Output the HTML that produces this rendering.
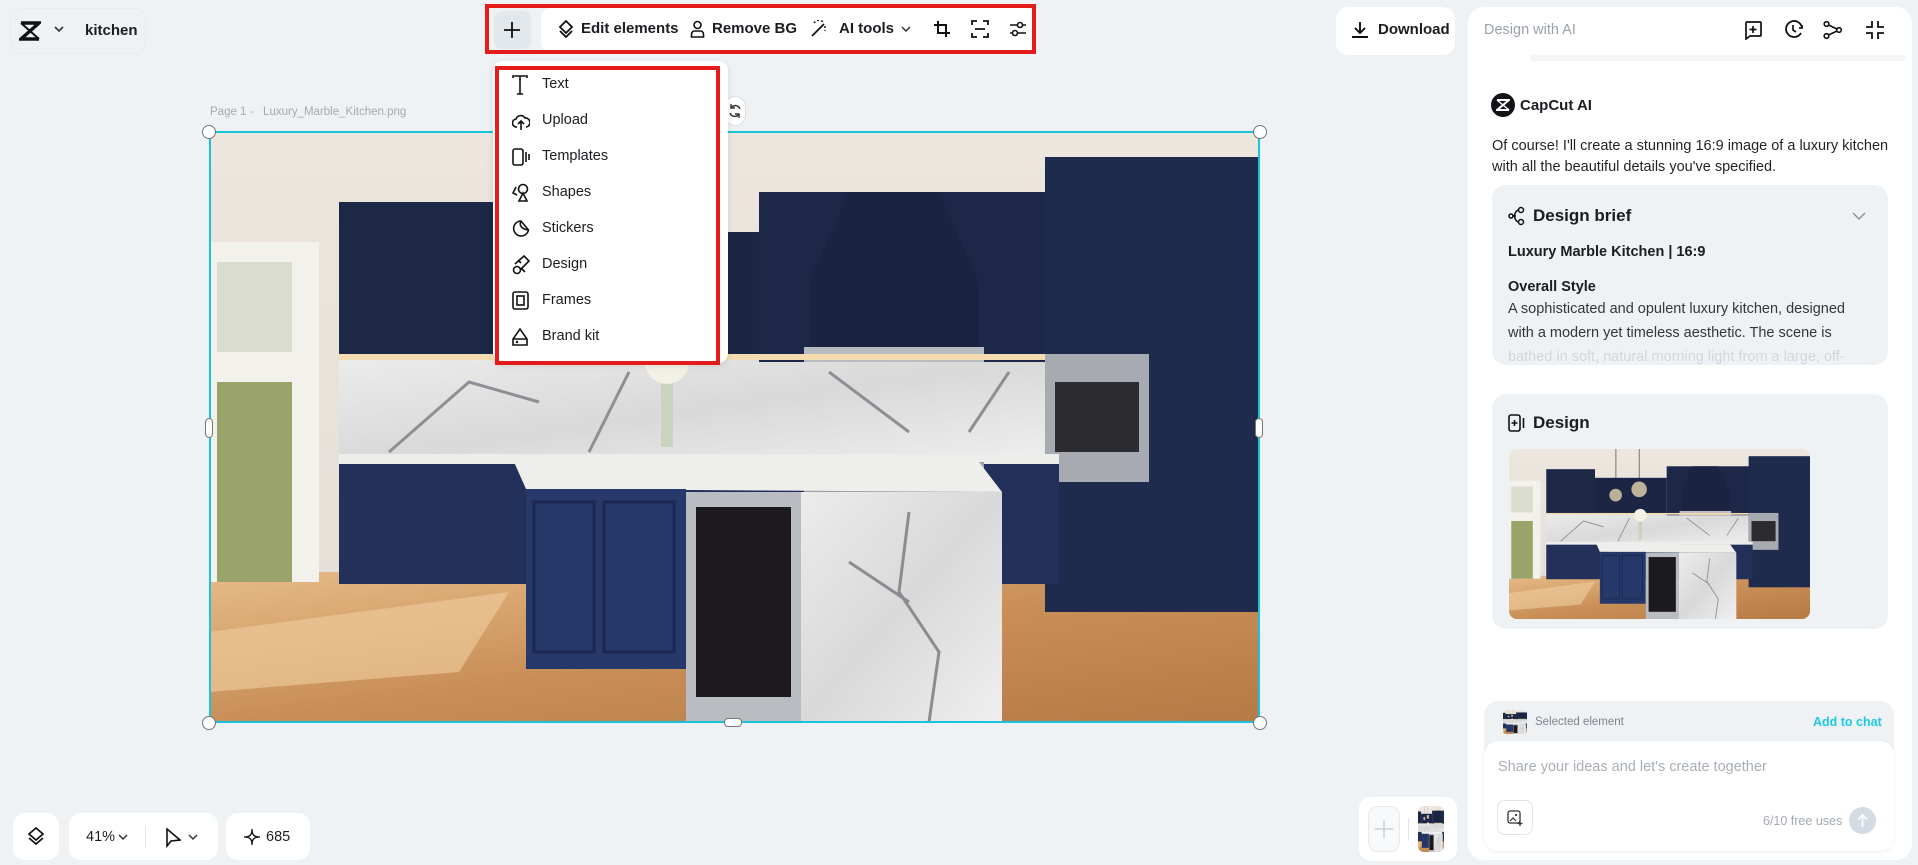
<!DOCTYPE html>
<html><head><meta charset="utf-8">
<style>
*{box-sizing:border-box;margin:0;padding:0}
body{width:1918px;height:865px;overflow:hidden;background:#eef2f5;font-family:"Liberation Sans",sans-serif;color:#1b1d21;position:relative}
.abs{position:absolute}
.wbox{position:absolute;background:#fff;border-radius:12px}
.tb span{position:absolute;top:20px;font-size:15px;font-weight:bold;color:#1b1d21}
.ico{position:absolute}
.menu div{position:absolute;left:0;height:36px;width:220px}
.menu span{position:absolute;left:40px;top:9px;font-size:14.5px}
.menu svg{position:absolute;left:10px;top:8px}
.rp p{font-size:14.5px;line-height:21px}
</style></head><body>
<svg width="0" height="0" style="position:absolute">
<defs>
<symbol id="kit" viewBox="0 0 1050 590" preserveAspectRatio="none">
<linearGradient id="cl" x1="0" y1="0" x2="0" y2="1"><stop offset="0" stop-color="#ece6de"/><stop offset="1" stop-color="#e2ddd6"/></linearGradient>
<linearGradient id="fl" x1="0" y1="0" x2="1" y2="1"><stop offset="0" stop-color="#e6bb88"/><stop offset=".5" stop-color="#c98f57"/><stop offset="1" stop-color="#b57a45"/></linearGradient>
<linearGradient id="mb" x1="0" y1="0" x2="1" y2="1"><stop offset="0" stop-color="#ececeb"/><stop offset=".5" stop-color="#d9d9da"/><stop offset="1" stop-color="#efefef"/></linearGradient>
<rect width="1050" height="590" fill="url(#cl)"/>
<rect x="0" y="440" width="1050" height="150" fill="url(#fl)"/>
<path d="M0 500 L300 460 L250 540 L0 560Z" fill="#f0cfa0" opacity=".6"/>
<rect x="0" y="110" width="110" height="340" fill="#f3f1ec"/>
<rect x="8" y="250" width="75" height="200" fill="#9aa36a"/>
<rect x="8" y="130" width="75" height="90" fill="#d9dccf"/>
<rect x="130" y="225" width="720" height="105" fill="url(#mb)"/>
<path d="M180 320 L260 250 L330 270 M380 320 L420 240 M620 240 L700 300 M760 300 L800 240" stroke="#8d8f95" stroke-width="3" fill="none"/>
<rect x="130" y="70" width="170" height="155" fill="#1d2746"/>
<rect x="300" y="100" width="250" height="125" fill="#1c2644"/>
<rect x="550" y="60" width="300" height="170" fill="#1d2848"/>
<path d="M600 150 L640 60 L730 60 L770 150 L770 225 L600 225Z" fill="#1a2341"/>
<rect x="595" y="215" width="180" height="15" fill="#b8bbc0"/>
<rect x="130" y="222" width="720" height="6" fill="#f4dcb0"/>
<rect x="836" y="25" width="214" height="455" fill="#1f2b4c"/>
<rect x="836" y="222" width="104" height="128" fill="#a7abb1"/>
<rect x="846" y="250" width="84" height="70" fill="#2c2c30"/>
<rect x="130" y="322" width="720" height="10" fill="#ededeb"/>
<rect x="130" y="332" width="720" height="120" fill="#22305a"/>
<rect x="595" y="330" width="180" height="30" fill="#9ea1a6"/>
<path d="M305 330 L770 330 L793 360 L317 357Z" fill="#eeeeec"/>
<rect x="317" y="357" width="160" height="180" fill="#27386a"/>
<rect x="325" y="370" width="60" height="150" fill="none" stroke="#1b2750" stroke-width="3"/>
<rect x="395" y="370" width="70" height="150" fill="none" stroke="#1b2750" stroke-width="3"/>
<rect x="477" y="360" width="115" height="230" fill="#b9bcc0"/>
<rect x="487" y="375" width="95" height="190" fill="#1c1a1c"/>
<rect x="592" y="360" width="201" height="230" fill="url(#mb)"/>
<path d="M700 380 L690 460 L730 520 L720 590 M640 430 L700 470" stroke="#8a8c92" stroke-width="3" fill="none"/>
<rect x="452" y="245" width="12" height="70" fill="#c9d3c0"/>
<circle cx="458" cy="230" r="22" fill="#f3f0e6"/>
<rect x="372" y="0" width="2" height="140" fill="#222"/>
<circle cx="372" cy="160" r="22" fill="#d7c9a6" opacity=".85"/>
<rect x="453" y="0" width="2" height="115" fill="#222"/>
<circle cx="454" cy="140" r="27" fill="#d9cda9" opacity=".85"/>
</symbol>
</defs></svg>

<!-- top-left -->
<div class="wbox" style="left:10px;top:8px;width:136px;height:46px;background:#eef2f5;border:1px solid #e8ecef"></div>
<svg class="ico" style="left:19px;top:21px" width="22" height="20" viewBox="0 0 22 20"><path d="M2 2h18L2 18h18" stroke="#111" stroke-width="3.4" fill="none"/><path d="M2 2L20 18M20 2L2 18" stroke="#111" stroke-width="2"/></svg>
<svg class="ico" style="left:54px;top:26px" width="10" height="8"><path d="M1 1l4 4 4-4" stroke="#333" stroke-width="1.6" fill="none"/></svg>
<div class="abs" style="left:85px;top:22px;font-size:15px;font-weight:bold">kitchen</div>

<!-- toolbar -->
<div class="abs" style="left:494px;top:11px;width:37px;height:38px;background:#e3e8ec;border-radius:8px"></div>
<svg class="ico" style="left:503px;top:21px" width="18" height="18"><path d="M9 1v16M1 9h16" stroke="#111" stroke-width="1.8"/></svg>
<div class="abs" style="left:541px;top:8px;width:494px;height:44px;background:#fff;border-radius:10px"></div>
<div class="abs" style="left:485px;top:4px;width:551px;height:50px;border:4px solid #e31b1b"></div>
<div class="tb">
<svg class="ico" style="left:558px;top:20px" width="16" height="18" viewBox="0 0 16 18"><path d="M8 1l6 6-6 6-6-6z" stroke="#111" stroke-width="1.8" fill="none"/><path d="M2 11l6 6 6-6" stroke="#111" stroke-width="1.8" fill="none"/></svg>
<span style="left:581px">Edit elements</span>
<svg class="ico" style="left:690px;top:20px" width="15" height="18"><circle cx="7.5" cy="5" r="3.5" stroke="#111" stroke-width="1.6" fill="none"/><path d="M1.5 17v-3a3 3 0 013-3h6a3 3 0 013 3v3z" stroke="#111" stroke-width="1.6" fill="none"/></svg>
<span style="left:712px">Remove BG</span>
<svg class="ico" style="left:809px;top:20px" width="18" height="18"><path d="M3 16L15 4" stroke="#111" stroke-width="1.8"/><path d="M5 3a6 6 0 0110 0M16 6v5" stroke="#111" stroke-width="1.4" stroke-dasharray="2 2" fill="none"/></svg>
<span style="left:839px">AI tools</span>
<svg class="ico" style="left:901px;top:26px" width="10" height="7"><path d="M1 1l4 4 4-4" stroke="#333" stroke-width="1.5" fill="none"/></svg>
<svg class="ico" style="left:933px;top:20px" width="18" height="18"><path d="M5 1v12h12M1 5h12v12" stroke="#111" stroke-width="2" fill="none"/></svg>
<svg class="ico" style="left:971px;top:20px" width="18" height="18"><path d="M1 5V1h5M17 5V1h-5M1 13v4h5M17 13v4h-5M4 9h10" stroke="#111" stroke-width="1.8" fill="none"/></svg>
<svg class="ico" style="left:1009px;top:20px" width="18" height="18"><path d="M1 5h16M1 13h16" stroke="#111" stroke-width="1.6"/><circle cx="11" cy="5" r="2.5" fill="#fff" stroke="#111" stroke-width="1.6"/><circle cx="6" cy="13" r="2.5" fill="#fff" stroke="#111" stroke-width="1.6"/></svg>
</div>

<!-- download -->
<div class="wbox" style="left:1336px;top:7px;width:119px;height:48px"></div>
<svg class="ico" style="left:1351px;top:21px" width="18" height="18"><path d="M9 1v11M4 7l5 5 5-5M1 16h16" stroke="#111" stroke-width="1.9" fill="none"/></svg>
<div class="abs" style="left:1378px;top:21px;font-size:15px;font-weight:bold">Download</div>

<!-- canvas -->
<div class="abs" style="left:210px;top:106px;font-size:11.5px;color:#a3a9b0">Page 1 -&nbsp;&nbsp; Luxury_Marble_Kitchen.png</div>
<svg class="abs" style="left:209px;top:132px" width="1050" height="590"><use href="#kit"/></svg>
<div class="abs" style="left:209px;top:131px;width:1051px;height:592px;border:2px solid #19c3dc"></div>
<div class="abs" style="left:202px;top:125px;width:14px;height:14px;border-radius:50%;background:#fff;border:1px solid #777"></div>
<div class="abs" style="left:1253px;top:125px;width:14px;height:14px;border-radius:50%;background:#fff;border:1px solid #777"></div>
<div class="abs" style="left:202px;top:716px;width:14px;height:14px;border-radius:50%;background:#fff;border:1px solid #777"></div>
<div class="abs" style="left:1253px;top:716px;width:14px;height:14px;border-radius:50%;background:#fff;border:1px solid #777"></div>
<div class="abs" style="left:205px;top:418px;width:8px;height:20px;border-radius:4px;background:#fff;border:1px solid #777"></div>
<div class="abs" style="left:1255px;top:418px;width:8px;height:20px;border-radius:4px;background:#fff;border:1px solid #777"></div>
<div class="abs" style="left:724px;top:718px;width:18px;height:9px;border-radius:4px;background:#fff;border:1px solid #777"></div>
<div class="abs" style="left:724px;top:96px;width:22px;height:30px;border-radius:11px;background:#fff;border:1px solid #ddd"></div>
<svg class="ico" style="left:728px;top:103px" width="14" height="16"><path d="M12 6a5 5 0 00-9-1M2 10a5 5 0 009 1" stroke="#333" stroke-width="1.5" fill="none"/><path d="M3 1v4h4M11 15v-4H7" stroke="#333" stroke-width="1.4" fill="none"/></svg>

<!-- dropdown -->
<div class="abs" style="left:493px;top:61px;width:235px;height:302px;background:#fff;border-radius:10px;box-shadow:0 2px 8px rgba(0,0,0,.1)"></div>
<div class="abs" style="left:495px;top:66px;width:225px;height:299px;border:4px solid #e31b1b"></div>
<div class="menu abs" style="left:502px;top:67px">
<div style="top:0"><svg width="16" height="20"><path d="M1 3V1h14v2M8 1v18M5 19h6" stroke="#111" stroke-width="1.6" fill="none"/></svg><span>Text</span></div>
<div style="top:36px"><svg width="18" height="20"><path d="M5 16a4 4 0 01-1-8 5 5 0 019-1 4 4 0 011 9" stroke="#111" stroke-width="1.6" fill="none"/><path d="M9 19v-9M6 13l3-3 3 3" stroke="#111" stroke-width="1.6" fill="none"/></svg><span>Upload</span></div>
<div style="top:72px"><svg width="18" height="20"><rect x="1" y="2" width="10" height="16" rx="2" stroke="#111" stroke-width="1.6" fill="none"/><path d="M14 5v10M17 7v6" stroke="#111" stroke-width="1.6"/></svg><span>Templates</span></div>
<div style="top:108px"><svg width="18" height="20"><circle cx="11" cy="6" r="4.5" stroke="#111" stroke-width="1.6" fill="none"/><path d="M4 4L1 10l4 2M7 18l4-8 4 8z" stroke="#111" stroke-width="1.6" fill="none"/></svg><span>Shapes</span></div>
<div style="top:144px"><svg width="18" height="20"><path d="M9 2a7.5 7.5 0 107.5 9L9 2z" stroke="#111" stroke-width="1.6" fill="none"/><path d="M9 2c-2 4 0 8 7.5 9" stroke="#111" stroke-width="1.6" fill="none"/></svg><span>Stickers</span></div>
<div style="top:180px"><svg width="18" height="20"><circle cx="5" cy="15" r="3.5" stroke="#111" stroke-width="1.6" fill="none"/><path d="M3 9L12 1l5 5-9 9M6 5l3 3M10 14l3 3" stroke="#111" stroke-width="1.6" fill="none"/></svg><span>Design</span></div>
<div style="top:216px"><svg width="18" height="20"><rect x="1" y="1" width="15" height="17" rx="2" stroke="#111" stroke-width="1.6" fill="none"/><rect x="5" y="5" width="7" height="9" stroke="#111" stroke-width="1.6" fill="none"/></svg><span>Frames</span></div>
<div style="top:252px"><svg width="18" height="20"><path d="M1 18V12l7-10 7 10v6zM1 12h14" stroke="#111" stroke-width="1.6" fill="none"/><circle cx="5" cy="15" r="1.2" fill="#111"/></svg><span>Brand kit</span></div>
</div>

<!-- bottom left -->
<div class="wbox" style="left:13px;top:813px;width:46px;height:47px"></div>
<svg class="ico" style="left:27px;top:827px" width="18" height="18"><path d="M9 1l7 6-7 6-7-6z" stroke="#111" stroke-width="1.7" fill="none"/><path d="M2 11l7 6 7-6" stroke="#111" stroke-width="1.7" fill="none"/></svg>
<div class="wbox" style="left:69px;top:813px;width:149px;height:47px"></div>
<div class="abs" style="left:86px;top:829px;font-size:14.5px">41%</div>
<svg class="ico" style="left:118px;top:834px" width="10" height="7"><path d="M1 1l4 4 4-4" stroke="#333" stroke-width="1.5" fill="none"/></svg>
<div class="abs" style="left:145px;top:826px;width:1px;height:22px;background:#e3e6ea"></div>
<svg class="ico" style="left:165px;top:828px" width="16" height="20"><path d="M2 1v17l4-5 9-1z" stroke="#111" stroke-width="1.6" fill="none"/></svg>
<svg class="ico" style="left:188px;top:834px" width="10" height="7"><path d="M1 1l4 4 4-4" stroke="#333" stroke-width="1.5" fill="none"/></svg>
<div class="wbox" style="left:226px;top:813px;width:84px;height:47px"></div>
<svg class="ico" style="left:244px;top:829px" width="16" height="16"><path d="M8 0C8 6 10 8 16 8 10 8 8 10 8 16 8 10 6 8 0 8 6 8 8 6 8 0z" stroke="#111" stroke-width="1.3" fill="none"/></svg>
<div class="abs" style="left:266px;top:829px;font-size:14.5px">685</div>

<!-- bottom right thumbs -->
<div class="wbox" style="left:1359px;top:797px;width:98px;height:64px"></div>
<div class="abs" style="left:1368px;top:806px;width:32px;height:46px;border:1px solid #e6e9ec;border-radius:10px;background:#f7f9fa"></div>
<svg class="ico" style="left:1374px;top:819px" width="20" height="20"><path d="M10 1v18M1 10h18" stroke="#ccd2d8" stroke-width="1.6"/></svg>
<div class="abs" style="left:1408px;top:818px;width:1px;height:22px;background:#e3e6ea"></div>
<svg class="abs" style="left:1418px;top:806px;border-radius:6px" width="26" height="46"><use href="#kit" x="-10" width="46" height="46"/></svg>

<!-- right panel -->
<div class="wbox rp" style="left:1468px;top:7px;width:444px;height:853px;border-radius:16px">
<div class="abs" style="left:16px;top:15px;font-size:14.5px;color:#9aa1a9">Design with AI</div>
<svg class="ico" style="left:275px;top:13px" width="20" height="20"><path d="M3 2h14a1 1 0 011 1v12a1 1 0 01-1 1H7l-4 3V3a1 1 0 011-1z" stroke="#111" stroke-width="1.7" fill="none"/><path d="M10 6v7M6.5 9.5h7" stroke="#111" stroke-width="1.7"/></svg>
<svg class="ico" style="left:316px;top:13px" width="20" height="20"><path d="M17 13A8 8 0 1118 8" stroke="#111" stroke-width="1.8" fill="none"/><path d="M9 5v5l3 2M15 8l3 0 0-3" stroke="#111" stroke-width="1.7" fill="none"/></svg>
<svg class="ico" style="left:355px;top:13px" width="20" height="20"><circle cx="3.5" cy="4" r="2.3" stroke="#111" stroke-width="1.6" fill="none"/><circle cx="3.5" cy="16" r="2.3" stroke="#111" stroke-width="1.6" fill="none"/><circle cx="16" cy="10" r="2.3" stroke="#111" stroke-width="1.6" fill="none"/><path d="M5.5 5l8.5 4M5.5 15l8.5-4" stroke="#111" stroke-width="1.6"/></svg>
<svg class="ico" style="left:397px;top:13px" width="20" height="20"><path d="M7 1v6H1M13 1v6h6M7 19v-6H1M13 19v-6h6" stroke="#111" stroke-width="1.8" fill="none"/></svg>
<div class="abs" style="left:62px;top:48px;width:376px;height:6px;background:#f3f5f7;border-radius:4px"></div>
<div class="abs" style="left:23px;top:86px;width:24px;height:24px;border-radius:50%;background:#121316"></div>
<svg class="ico" style="left:28px;top:92px" width="14" height="12"><path d="M1 1h12L1 11h12" stroke="#fff" stroke-width="2" fill="none"/><path d="M1 1l12 10M13 1L1 11" stroke="#fff" stroke-width="1.4"/></svg>
<div class="abs" style="left:52px;top:90px;font-size:15px;font-weight:bold">CapCut AI</div>
<p class="abs" style="left:24px;top:129px;width:410px;color:#1f2226">Of course! I'll create a stunning 16:9 image of a luxury kitchen with all the beautiful details you've specified.</p>
<div class="abs" style="left:24px;top:178px;width:396px;height:180px;background:#eef2f5;border-radius:14px;overflow:hidden">
<svg class="ico" style="left:16px;top:21px" width="18" height="20"><circle cx="13" cy="4" r="2.5" stroke="#111" stroke-width="1.5" fill="none"/><circle cx="13" cy="16" r="2.5" stroke="#111" stroke-width="1.5" fill="none"/><path d="M10 4a7 7 0 000 12M4 10h4" stroke="#111" stroke-width="1.5" fill="none"/><circle cx="3" cy="10" r="2" fill="none" stroke="#111" stroke-width="1.5"/></svg>
<div class="abs" style="left:41px;top:21px;font-size:17px;font-weight:bold">Design brief</div>
<svg class="ico" style="left:360px;top:27px" width="14" height="8"><path d="M1 1l6 6 6-6" stroke="#888" stroke-width="1.3" fill="none"/></svg>
<div class="abs" style="left:16px;top:59px;font-size:14.5px;font-weight:bold">Luxury Marble Kitchen | 16:9</div>
<div class="abs" style="left:16px;top:94px;font-size:14.5px;font-weight:bold">Overall Style</div>
<p class="abs" style="left:16px;top:112px;width:355px;line-height:24px;color:#33373c">A sophisticated and opulent luxury kitchen, designed with a modern yet timeless aesthetic. The scene is <span style="color:#d3d7db">bathed in soft, natural morning light from a large, off-</span></p>
</div>
<div class="abs" style="left:24px;top:387px;width:396px;height:235px;background:#eef2f5;border-radius:14px">
<svg class="ico" style="left:16px;top:19px" width="18" height="20"><rect x="1" y="2" width="11" height="16" rx="2" stroke="#111" stroke-width="1.6" fill="none"/><path d="M6.5 7v6M3.5 10h6M15.5 5v10" stroke="#111" stroke-width="1.6"/></svg>
<div class="abs" style="left:41px;top:19px;font-size:17px;font-weight:bold">Design</div>
<svg class="abs" style="left:17px;top:55px;border-radius:8px" width="301" height="170"><use href="#kit" width="301" height="170"/></svg>
</div>
<div class="abs" style="left:16px;top:694px;width:410px;height:150px;background:#eef2f5;border-radius:14px"></div>
<svg class="abs" style="left:35px;top:703px;border-radius:3px" width="24" height="24"><use href="#kit" x="-10" width="44" height="24"/></svg>
<div class="abs" style="left:67px;top:709px;font-size:11.5px;color:#7d848c">Selected element</div>
<div class="abs" style="left:345px;top:708px;font-size:12.5px;font-weight:bold;color:#1ec8e0">Add to chat</div>
<div class="abs" style="left:16px;top:734px;width:410px;height:110px;background:#fff;border-radius:14px;box-shadow:0 1px 4px rgba(0,0,0,.06)"></div>
<div class="abs" style="left:30px;top:752px;font-size:14.5px;color:#a8aeb5">Share your ideas and let's create together</div>
<div class="abs" style="left:29px;top:793px;width:36px;height:35px;border:1px solid #dfe3e7;border-radius:8px"></div>
<svg class="ico" style="left:39px;top:803px" width="16" height="16"><rect x="1" y="1" width="12" height="12" rx="2" stroke="#333" stroke-width="1.3" fill="none"/><path d="M3 11l3-3 3 3" stroke="#333" stroke-width="1.2" fill="none"/><circle cx="9" cy="5" r="1.1" fill="#333"/><path d="M13 11v5M10.5 13.5h5" stroke="#333" stroke-width="1.3"/></svg>
<div class="abs" style="left:295px;top:807px;font-size:12.5px;color:#a3a9b0">6/10 free uses</div>
<div class="abs" style="left:381px;top:800px;width:27px;height:27px;border-radius:50%;background:#d5dbe2"></div>
<svg class="ico" style="left:388px;top:806px" width="13" height="15"><path d="M6.5 14V2M2 6.5l4.5-4.5 4.5 4.5" stroke="#fff" stroke-width="1.7" fill="none"/></svg>
</div>
</body></html>
